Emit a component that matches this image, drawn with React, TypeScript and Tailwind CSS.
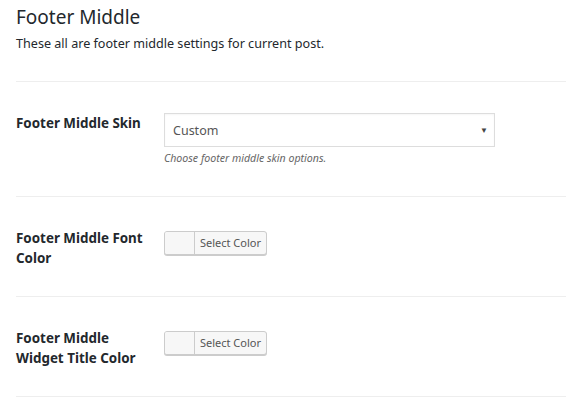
import React from 'react';

function ColorButton() {
  return (
    <button
      type="button"
      className="flex h-6 w-[103px] items-stretch overflow-hidden rounded-[3px] border border-[#ccc] bg-[#f7f7f7] shadow-[0_1px_0_#ccc]"
    >
      <span className="w-[30px] border-r border-[#ccc] bg-[#f7f7f7]" />
      <span className="flex flex-1 items-center justify-center text-[11px] text-[#555]">Select Color</span>
    </button>
  );
}

function Row({ label, children }: { label: React.ReactNode; children: React.ReactNode }) {
  return (
    <div className="grid grid-cols-[148px_1fr] border-b border-[#eee] pt-[31px] pb-7">
      <div className="pr-2 text-[13.4px] font-bold leading-5 text-[#23282d]">{label}</div>
      <div>{children}</div>
    </div>
  );
}

export default function App() {
  return (
    <div className="h-[400px] w-[566px] overflow-hidden bg-white pl-4 font-['Noto_Sans',sans-serif] text-[#23282d]">
      <div className="border-b border-[#eee] pt-[5px] pb-[27px]">
        <h2 className="text-[19px] leading-6">Footer Middle</h2>
        <p className="mt-[5px] text-[12.6px] leading-5">These all are footer middle settings for current post.</p>
      </div>

      <Row label="Footer Middle Skin">
        <div className="flex h-[34px] w-[331px] items-center justify-between border border-[#ddd] pt-[2px] pl-2 pr-[6px] text-[12.5px] text-[#555] shadow-[inset_0_1px_2px_rgba(0,0,0,0.04)]">
          <span>Custom</span>
          <span className="-mt-[3px] text-[8px] text-[#444]">▼</span>
        </div>
        <p className="mt-[3px] mb-[2px] text-[10.6px] italic leading-4 text-[#666]">Choose footer middle skin options.</p>
      </Row>

      <Row label={<>Footer Middle Font<br />Color</>}>
        <div className="pt-[3px]">
          <ColorButton />
        </div>
      </Row>

      <Row label={<>Footer Middle<br />Widget Title Color</>}>
        <div className="pt-[3px]">
          <ColorButton />
        </div>
      </Row>
    </div>
  );
}
